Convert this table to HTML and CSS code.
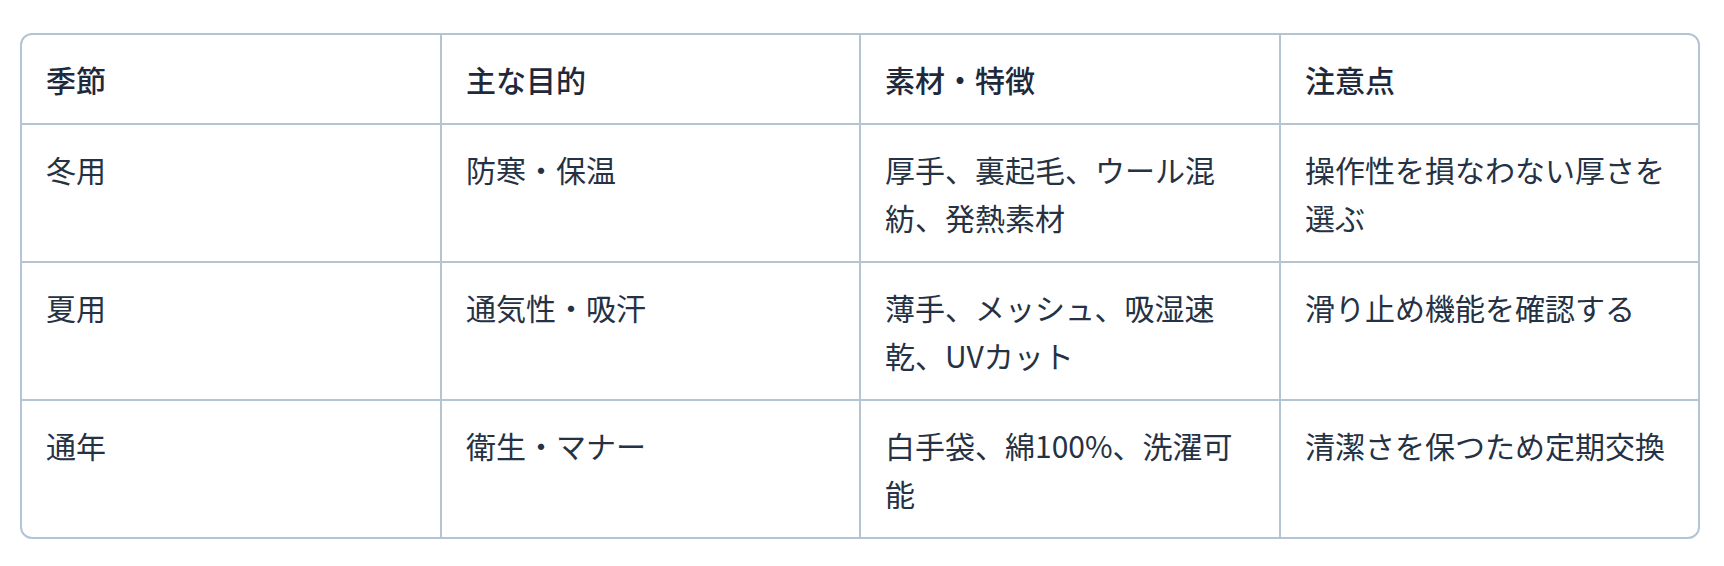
FILE: index.html
```html
<!DOCTYPE html>
<html lang="ja">
<head>
<meta charset="utf-8">
<title>手袋の季節別ガイド</title>
<link rel="stylesheet" href="styles.css">
</head>
<body>
<div class="page">
  <div class="table-wrap">
    <table class="guide">
      <colgroup>
        <col class="c1">
        <col class="c2">
        <col class="c3">
        <col class="c4">
      </colgroup>
      <thead>
        <tr>
          <th>季節</th>
          <th>主な目的</th>
          <th>素材・特徴</th>
          <th>注意点</th>
        </tr>
      </thead>
      <tbody>
        <tr>
          <td>冬用</td>
          <td>防寒・保温</td>
          <td>厚手、裏起毛、ウール混紡、発熱素材</td>
          <td>操作性を損なわない厚さを選ぶ</td>
        </tr>
        <tr>
          <td>夏用</td>
          <td>通気性・吸汗</td>
          <td>薄手、メッシュ、吸湿速乾、UVカット</td>
          <td>滑り止め機能を確認する</td>
        </tr>
        <tr>
          <td>通年</td>
          <td>衛生・マナー</td>
          <td>白手袋、綿100%、洗濯可能</td>
          <td>清潔さを保つため定期交換</td>
        </tr>
      </tbody>
    </table>
  </div>
</div>
</body>
</html>
```

FILE: styles.css
```css
html, body {
  margin: 0;
  padding: 0;
  background: #ffffff;
}

body {
  font-family: "Noto Sans CJK JP", "Noto Sans", sans-serif;
  color: #1e293b;
}

.page {
  padding: 33px 24px 0 20px;
}

.table-wrap {
  width: 1680px;
  border: 2px solid #b4c4d2;
  border-radius: 12px;
  overflow: hidden;
  box-sizing: border-box;
}

.guide {
  width: 100%;
  table-layout: fixed;
  border-collapse: separate;
  border-spacing: 0;
  font-size: 30px;
  line-height: 48px;
}

.guide .c1 { width: 420px; }
.guide .c2 { width: 419px; }
.guide .c3 { width: 420px; }
.guide .c4 { width: 417px; }

.guide th,
.guide td {
  padding: 20px 24px;
  text-align: left;
  vertical-align: top;
  border-right: 2px solid #b4c4d2;
  border-bottom: 2px solid #b4c4d2;
}

.guide th:last-child,
.guide td:last-child {
  border-right: none;
}

.guide tbody tr:last-child td {
  border-bottom: none;
}

.guide th {
  font-weight: 500;
  color: #1e293b;
}

.guide td {
  font-weight: 400;
  color: #253244;
}
```
